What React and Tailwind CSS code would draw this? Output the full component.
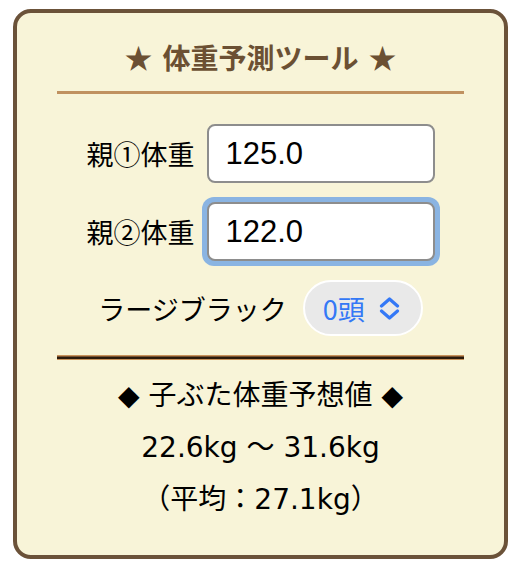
import { useState } from 'react';

const jp = { fontFamily: '"Noto Sans CJK JP", sans-serif' };
const result = { fontFamily: '"DejaVu Sans", "Noto Sans CJK JP", sans-serif' };

const WeightRow = ({ label, value, focused }) => (
    <div className="flex items-center justify-center gap-[12px]">
        <span className="text-[27px] text-black leading-none" style={jp}>{label}</span>
        <div className={`rounded-[12px] ${focused ? 'p-[5px] bg-[#8ab4e2] -m-[5px]' : ''}`}>
            <input
                defaultValue={value}
                className="block w-[228px] h-[59px] rounded-[8px] border-2 border-[#8d8d8d] bg-white px-[17px] text-[31px] text-black outline-none"
                style={{ fontFamily: '"Liberation Sans", Arial, sans-serif' }}
            />
        </div>
    </div>
);

const App = () => {
    const [count] = useState(0);

    return (
        <div className="min-h-[584px] w-[509px] bg-white pt-[9px] pl-[13px]">
            <div className="w-[495px] h-[550px] rounded-[18px] border-4 border-[#6b5239] bg-[#f8f4d8] px-[40px] pt-[24px]">
                <h1 className="h-[40px] flex items-center justify-center gap-[10px] text-[28px] font-bold text-[#6b5033] leading-none" style={jp}>
                    <span>★</span>
                    <span>体重予測ツール</span>
                    <span>★</span>
                </h1>
                <div className="mt-[14px] h-[3px] bg-[#c09160]" />

                <div className="mt-[30px] flex flex-col gap-[19px]">
                    <WeightRow label="親①体重" value="125.0" />
                    <WeightRow label="親②体重" value="122.0" focused />
                </div>

                <div className="mt-[19px] flex items-center justify-center gap-[16px]">
                    <span className="text-[27px] text-black leading-none" style={jp}>ラージブラック</span>
                    <div className="flex items-center h-[56px] w-[120px] rounded-full border-2 border-white bg-[#e9e9e9] pl-[18px] pr-[16px] gap-[14px]">
                        <span className="text-[27px] text-[#3478f6] leading-none" style={jp}>{count}頭</span>
                        <svg width="21" height="23" viewBox="0 0 21 23" fill="none" stroke="#3478f6" strokeWidth="3.2" strokeLinecap="round" strokeLinejoin="round">
                            <path d="M2.5 9 L10.5 2 L18.5 9" />
                            <path d="M2.5 14 L10.5 21 L18.5 14" />
                        </svg>
                    </div>
                </div>

                <div className="mt-[19px] flex flex-col">
                    <div className="h-[1px] bg-[#c8925a]" />
                    <div className="h-[1px] bg-[#7a5230]" />
                    <div className="h-[2px] bg-[#2a1a0c]" />
                    <div className="h-[1px] bg-[#c8925a]" />
                </div>

                <div className="mt-[10px] flex flex-col items-center text-[28px] text-black leading-[52px]" style={result}>
                    <p>◆ 子ぶた体重予想値 ◆</p>
                    <p>22.6kg 〜 31.6kg</p>
                    <p>（平均：27.1kg）</p>
                </div>
            </div>
        </div>
    );
};

export default App;
